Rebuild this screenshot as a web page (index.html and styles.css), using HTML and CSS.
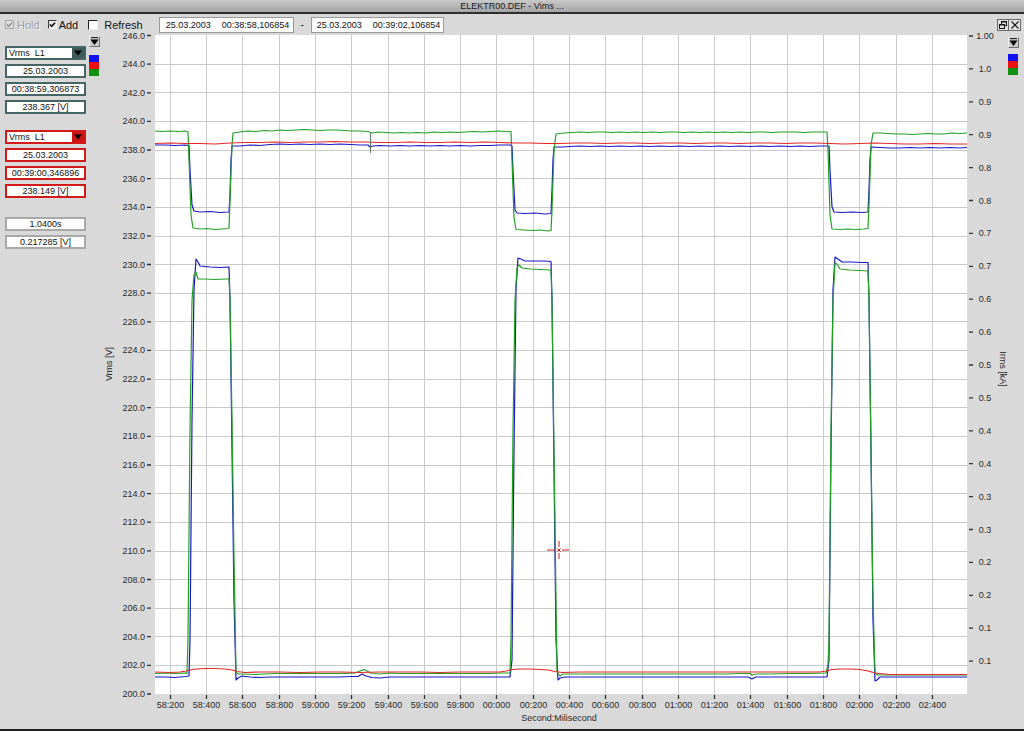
FILE: index.html
```html
<!DOCTYPE html>
<html>
<head>
<meta charset="utf-8">
<title>ELEKTR00.DEF - Vims</title>
<link rel="stylesheet" href="styles.css">
</head>
<body>
<div class="window">
  <div class="titlebar">ELEKTR00.DEF - Vims ...</div>
  <div class="toolbar">
    <label class="chk chk-hold"><span class="box box-disabled"><svg viewBox="0 0 8 8" width="8" height="8"><path d="M1 3.5 L3 5.5 L7 1.5" fill="none" stroke="#8c8c8c" stroke-width="1.6"/></svg></span><span class="chk-text">Hold</span></label>
    <label class="chk chk-add"><span class="box box-checked"><svg viewBox="0 0 8 8" width="8" height="8"><path d="M1 3.5 L3 5.5 L7 1.5" fill="none" stroke="#000" stroke-width="1.6"/></svg></span><span class="chk-text">Add</span></label>
    <label class="chk chk-refresh"><span class="box box-empty"></span><span class="chk-text">Refresh</span></label>
    <div class="range">
      <div class="datebox"><span class="d-date">25.03.2003</span><span class="d-time">00:38:58,106854</span></div>
      <span class="range-dash">-</span>
      <div class="datebox datebox-2"><span class="d-date">25.03.2003</span><span class="d-time">00:39:02,106854</span></div>
    </div>
    <div class="winbtns">
      <span class="winbtn"><svg viewBox="0 0 10 10" width="10" height="10"><rect x="3.5" y="1.5" width="5" height="4" fill="none" stroke="#111"/><rect x="1.5" y="4.5" width="5" height="4" fill="#e2e2e2" stroke="#111"/><path d="M3.5 2h5M1.5 5h5" stroke="#111"/></svg></span>
      <span class="winbtn"><svg viewBox="0 0 10 10" width="10" height="10"><path d="M1.5 1.5 L8.5 8.5 M8.5 1.5 L1.5 8.5" stroke="#111" stroke-width="1.1"/></svg></span>
    </div>
  </div>
  <div class="content">
    <aside class="side-left">
      <div class="fields">
        <div class="group group-teal">
          <div class="combo"><span class="combo-text">Vrms&nbsp; L1</span><span class="combo-btn"><svg viewBox="0 0 10 8" width="10" height="8"><path d="M1 1.5 H9 L5 6.5 Z" fill="#000"/></svg></span></div>
          <div class="field">25.03.2003</div>
          <div class="field">00:38:59,306873</div>
          <div class="field">238.367 [V]</div>
        </div>
        <div class="group group-red">
          <div class="combo"><span class="combo-text">Vrms&nbsp; L1</span><span class="combo-btn"><svg viewBox="0 0 10 8" width="10" height="8"><path d="M1 1.5 H9 L5 6.5 Z" fill="#000"/></svg></span></div>
          <div class="field">25.03.2003</div>
          <div class="field">00:39:00,346896</div>
          <div class="field">238.149 [V]</div>
        </div>
        <div class="group group-gray">
          <div class="field">1.0400s</div>
          <div class="field">0.217285 [V]</div>
        </div>
      </div>
      <div class="legend-col">
        <span class="menu-btn"><svg viewBox="0 0 11 11" width="11" height="11"><path d="M2 1.5 H9" stroke="#222" stroke-width="1.2"/><path d="M1.5 3.5 H9.5 L5.5 9 Z" fill="#000"/></svg></span>
        <div class="swatches"><span class="sw sw-blue"></span><span class="sw sw-red"></span><span class="sw sw-green"></span></div>
      </div>
    </aside>

    <svg class="chart" width="904" height="694" viewBox="102 35 904 694">
      <rect class="plot-bg" x="155" y="35" width="812" height="659"/>
      <path class="grid" d="M155 64.5H967M155 92.5H967M155 121.5H967M155 150.5H967M155 178.5H967M155 207.5H967M155 236.5H967M155 264.5H967M155 293.5H967M155 321.5H967M155 350.5H967M155 379.5H967M155 407.5H967M155 436.5H967M155 465.5H967M155 493.5H967M155 522.5H967M155 551.5H967M155 579.5H967M155 608.5H967M155 636.5H967M155 665.5H967
      M170.5 35V694M206.5 35V694M242.5 35V694M279.5 35V694M315.5 35V694M351.5 35V694M388.5 35V694M424.5 35V694M460.5 35V694M496.5 35V694M533.5 35V694M569.5 35V694M605.5 35V694M642.5 35V694M678.5 35V694M714.5 35V694M750.5 35V694M787.5 35V694M823.5 35V694M859.5 35V694M896.5 35V694M932.5 35V694"/>

      <!-- traces -->
      <polyline class="tr tr-blue" points="155,145 165,145 175,145.5 185,145 189,145.5 190,170 192,205 194,211 200,212 210,211.5 220,212.5 229,212 230,195 231,160 232,146 240,146 250,145 260,145.5 270,144.5 280,144 290,144.5 300,144 310,144.5 320,144 330,144.5 340,144 350,144.5 360,145 368,145 370,147 373,146 380,145.5 390,146 400,145.5 410,146 420,145.5 430,146 440,145.5 450,146 460,145.5 470,146 480,145.5 490,145.5 500,145 510,145 512,146 513,170 515,210 517,213 525,213.5 535,213 545,214 551,213.5 552,190 553,160 554,147 562,147 570,146.5 580,146 590,146.5 600,146 610,146.5 620,146 630,146.5 640,146 650,146.5 660,146 670,146.5 680,146 690,146.5 700,146 710,146.5 720,146 730,146.5 740,146 750,146.5 760,146 770,146.5 780,146 790,146.5 800,146 810,146.5 820,146 829,146 830,170 832,207 834,212 842,212.5 852,212 862,212.5 868,212 869,190 870,160 871,147 880,147.5 890,148 900,148 910,147.5 920,148 930,147.5 940,148 950,147.5 960,148 967,147.5"/>
      <polyline class="tr tr-green" points="155,131 162,131.5 170,131 178,131.5 185,131 188,132 189,160 191,215 193,228 200,229 207,228.5 215,229.5 222,229 228,228.5 229,228 230,200 232,145 233,133 240,132 248,131 256,131.5 264,130.5 272,131 280,130 288,130.5 296,130 304,129.5 312,130 320,130.5 328,130 336,130 344,130.5 352,131 360,131 368,131.5 372,133 378,132 386,132.5 394,133 402,132.5 410,133 418,132.5 426,133 434,132 442,132.5 450,132 458,132.5 466,132 474,131.5 482,132 490,131.5 498,131 506,131.5 511,131.5 512,160 514,218 516,229.5 524,230 532,230.5 540,230 548,231 551,230.5 552,210 554,150 556,134 564,133 572,132.5 580,132 588,132.5 596,132 604,132 612,132.5 620,132 628,132.5 636,132 644,132.5 652,132 660,132.5 668,132 676,132 684,132.5 692,132 700,132.5 708,132 716,132.5 724,132 732,132.5 740,132 748,132.5 756,132 764,132 772,132.5 780,132 788,132 796,132 804,132.5 812,132 820,132 827,132 828,150 830,215 832,229 840,229.5 848,229 856,229.5 864,229 868,228.5 869,205 871,145 873,133 880,133 888,133.5 896,134 904,134 912,134.5 920,134 928,133.5 936,134 944,134 952,133 960,133.5 967,133"/>
      <polyline class="tr tr-red" points="155,143.5 170,143 185,143.5 200,143.5 215,144 230,143 245,142.5 260,142.5 275,142 290,142.5 305,142 320,142 335,141.5 350,142 365,142 380,142.5 395,142.5 410,142 425,142.5 440,142.5 455,142 470,142.5 485,142 500,142.5 515,143 530,143 545,143.5 560,143.5 575,143 590,143 605,143.5 620,143 635,143 650,143.5 665,143 680,143 695,143.5 710,143 725,143 740,143.5 755,143 770,143 785,143.5 800,143 815,143 830,143.5 845,144 860,143.5 875,143 890,143.5 905,144 920,144 935,143.5 950,144 967,144"/>
      <path class="glitch" d="M370.5 133V153"/>

      <polyline class="tr tr-blue" points="155,677 165,677 175,677.5 185,676.5 189,676 190,640 192,420 194,290 196,259 198,262 200,266 210,267 220,267.5 229,267 230,300 232,450 234,600 236,680 238,678 242,676 250,677 260,677.5 270,677 280,677 290,677 300,677 310,677 320,677 330,677 340,677 350,676.5 358,676.5 362,674 366,676 372,677.5 380,678 390,677 400,677 410,677 420,677 430,677 440,677 450,677 460,677 470,677 480,677 490,677 500,677 510,677 512,660 514,450 516,290 518,258 521,259 525,261 535,261 545,261 551,261.5 552,300 554,470 556,640 558,680 560,678 565,677 580,677 600,677 620,677 640,677 660,677 680,677 700,677 720,677 740,677 748,677 752,679 756,677 770,677 790,677 810,677 827,677 829,660 831,450 833,290 835,257 838,259 842,262 852,262 862,262.5 868,262.5 869,300 871,450 873,620 875,681 877,680 880,677 900,677 920,677 940,677 967,677"/>
      <polyline class="tr tr-green" points="155,673.5 165,673 175,673.5 185,673 187,673.5 188,640 190,430 192,300 194,275 196,272 198,279 205,279 215,279.5 225,279 229,279 230,300 232,420 234,560 236,672 238,674 245,674 255,674.5 265,674 275,673.5 285,673.5 295,673.5 305,673.5 315,673.5 325,673.5 335,673.5 345,673.5 355,673 360,671 364,669.5 368,671.5 372,673.5 380,674 390,673 400,673.5 410,673.5 420,673.5 430,673.5 440,673.5 450,673.5 460,673.5 470,673.5 480,673.5 490,673.5 500,673 510,673 511,640 513,430 515,300 517,268 519,265 522,268 530,269 540,269.5 550,270 551,270 552,300 554,450 556,600 557,672 560,676 563,674 575,674 590,674 605,674 620,674 635,674 650,674 665,674 680,674 695,674 710,674 725,674 740,673.5 750,673.5 752,675 756,674 770,674 790,673.5 810,673.5 826,673 828,665 829,640 831,430 833,300 835,263 837,264 840,269 850,270 860,270.5 868,271 869,300 871,450 873,600 875,673 878,675 890,675 910,675 930,675 950,675 967,675"/>
      <polyline class="tr tr-red" points="155,672 170,672.5 180,672 186,671 190,670 196,669 205,668.5 215,668.5 225,669 232,670 237,671.5 245,672.5 260,672 280,672 300,672.5 320,672 340,672 360,672.5 380,672 400,672 420,672 440,672.5 460,672 480,672 500,672 506,671 512,669.5 520,669 530,669 540,669.5 548,670 555,671.5 562,672.5 580,672 600,672 620,672 640,672 660,672 680,672 700,672 720,672 740,672 760,672 780,672 800,672 820,672 826,671 832,669.5 840,669 850,669 860,669.5 868,671 875,673 890,674.5 910,674.5 930,674.5 967,674.5"/>

      <!-- cursor -->
      <path class="cursor" d="M547 550H556M562 550H569M559 541V547M559 553V559M557.5 548.5l3 3M560.5 548.5l-3 3"/>

      <!-- left axis -->
      <path class="tick" d="M147 35.5h4M147 64.1h4M147 92.8h4M147 121.4h4M147 150h4M147 178.7h4M147 207.3h4M147 235.9h4M147 264.5h4M147 293.2h4M147 321.8h4M147 350.4h4M147 379.1h4M147 407.7h4M147 436.3h4M147 465h4M147 493.6h4M147 522.2h4M147 550.8h4M147 579.5h4M147 608.1h4M147 636.7h4M147 665.4h4M147 694h4"/>
      <g class="lbl lbl-left">
        <text x="145" y="38.5">246.0</text><text x="145" y="67.1">244.0</text><text x="145" y="95.8">242.0</text><text x="145" y="124.4">240.0</text><text x="145" y="153">238.0</text><text x="145" y="181.7">236.0</text><text x="145" y="210.3">234.0</text><text x="145" y="238.9">232.0</text><text x="145" y="267.5">230.0</text><text x="145" y="296.2">228.0</text><text x="145" y="324.8">226.0</text><text x="145" y="353.4">224.0</text><text x="145" y="382.1">222.0</text><text x="145" y="410.7">220.0</text><text x="145" y="439.3">218.0</text><text x="145" y="468">216.0</text><text x="145" y="496.6">214.0</text><text x="145" y="525.2">212.0</text><text x="145" y="553.8">210.0</text><text x="145" y="582.5">208.0</text><text x="145" y="611.1">206.0</text><text x="145" y="639.7">204.0</text><text x="145" y="668.4">202.0</text><text x="145" y="697">200.0</text>
      </g>
      <text class="lbl axis-title" x="109" y="367" transform="rotate(-90 109 364)">Vrms [V]</text>

      <!-- right axis -->
      <path class="tick" d="M969 36h4M969 68.9h4M969 101.8h4M969 134.7h4M969 167.6h4M969 200.5h4M969 233.4h4M969 266.3h4M969 299.2h4M969 332.1h4M969 365h4M969 397.9h4M969 430.8h4M969 463.7h4M969 496.6h4M969 529.5h4M969 562.4h4M969 595.3h4M969 628.2h4M969 661.1h4"/>
      <g class="lbl lbl-right">
        <text x="985" y="39">1.00</text><text x="985" y="71.9">1.0</text><text x="985" y="104.8">0.9</text><text x="985" y="137.7">0.9</text><text x="985" y="170.6">0.8</text><text x="985" y="203.5">0.8</text><text x="985" y="236.4">0.7</text><text x="985" y="269.3">0.7</text><text x="985" y="302.2">0.6</text><text x="985" y="335.1">0.6</text><text x="985" y="368">0.5</text><text x="985" y="400.9">0.5</text><text x="985" y="433.8">0.4</text><text x="985" y="466.7">0.4</text><text x="985" y="499.6">0.3</text><text x="985" y="532.5">0.3</text><text x="985" y="565.4">0.2</text><text x="985" y="598.3">0.2</text><text x="985" y="631.2">0.1</text><text x="985" y="664.1">0.1</text>
      </g>
      <text class="lbl axis-title" x="1003" y="372" transform="rotate(90 1003 369)">Irms [kA]</text>

      <!-- bottom axis -->
      <path class="tick tick-v" d="M170.5 695v4M206.5 695v4M242.5 695v4M279.5 695v4M315.5 695v4M351.5 695v4M388.5 695v4M424.5 695v4M460.5 695v4M496.5 695v4M533.5 695v4M569.5 695v4M605.5 695v4M642.5 695v4M678.5 695v4M714.5 695v4M750.5 695v4M787.5 695v4M823.5 695v4M859.5 695v4M896.5 695v4M932.5 695v4"/>
      <g class="lbl lbl-bottom">
        <text x="170.5" y="707.5">58:200</text><text x="206.5" y="707.5">58:400</text><text x="242.5" y="707.5">58:600</text><text x="279.5" y="707.5">58:800</text><text x="315.5" y="707.5">59:000</text><text x="351.5" y="707.5">59:200</text><text x="388.5" y="707.5">59:400</text><text x="424.5" y="707.5">59:600</text><text x="460.5" y="707.5">59:800</text><text x="496.5" y="707.5">00:000</text><text x="533.5" y="707.5">00:200</text><text x="569.5" y="707.5">00:400</text><text x="605.5" y="707.5">00:600</text><text x="642.5" y="707.5">00:800</text><text x="678.5" y="707.5">01:000</text><text x="714.5" y="707.5">01:200</text><text x="750.5" y="707.5">01:400</text><text x="787.5" y="707.5">01:600</text><text x="823.5" y="707.5">01:800</text><text x="859.5" y="707.5">02:000</text><text x="896.5" y="707.5">02:200</text><text x="932.5" y="707.5">02:400</text>
      </g>
      <text class="lbl lbl-bottom" x="559" y="721">Second:Milisecond</text>
    </svg>

    <aside class="side-right">
      <span class="menu-btn"><svg viewBox="0 0 11 11" width="11" height="11"><path d="M2 1.5 H9" stroke="#222" stroke-width="1.2"/><path d="M1.5 3.5 H9.5 L5.5 9 Z" fill="#000"/></svg></span>
      <div class="swatches"><span class="sw sw-blue"></span><span class="sw sw-red"></span><span class="sw sw-green"></span></div>
    </aside>
  </div>
</div>
</body>
</html>
```

FILE: styles.css
```css
* { box-sizing: border-box; }

html, body {
  margin: 0;
  padding: 0;
}

body {
  width: 1024px;
  height: 731px;
  overflow: hidden;
  background: #d9d9d9;
  font-family: "Liberation Sans", Arial, sans-serif;
  color: #111;
}

.window {
  width: 1024px;
  height: 731px;
  display: flex;
  flex-direction: column;
  background: #d9d9d9;
  border-bottom: 2px solid #1e1e1e;
}

.titlebar {
  height: 14px;
  line-height: 12px;
  border-bottom: 2px solid #2e2e2e;
  background: linear-gradient(#c9c9c9, #b2b2b2 60%, #a6a6a6);
  text-align: center;
  font-size: 9px;
  color: #1a1a1a;
}

/* toolbar */
.toolbar {
  height: 21px;
  display: flex;
  align-items: center;
  font-size: 11px;
}

.chk {
  display: flex;
  align-items: center;
  color: #111;
}

.chk-hold { margin-left: 5px; }
.chk-add { margin-left: 8px; }
.chk-refresh { margin-left: 10px; }

.box {
  width: 9px;
  height: 9px;
  display: inline-flex;
  align-items: center;
  justify-content: center;
  margin-right: 3px;
}

.box-disabled {
  border: 1px solid #a8a8a8;
  background: #dcdcdc;
}

.box-checked {
  border-top: 1px solid #3a3a3a;
  border-left: 1px solid #3a3a3a;
  border-right: 1px solid #f4f4f4;
  border-bottom: 1px solid #f4f4f4;
  background: #e6e6e6;
  margin-right: 2px;
}

.box-empty {
  width: 10px;
  height: 10px;
  border-top: 1px solid #222;
  border-left: 1px solid #222;
  border-right: 1px solid #f0f0f0;
  border-bottom: 1px solid #f0f0f0;
  background: #fff;
  margin-right: 6px;
}

.chk-hold .chk-text {
  color: #9d9d9d;
  text-shadow: 1px 1px 0 #f2f2f2;
}

.range {
  display: flex;
  align-items: center;
  margin-left: 16px;
}

.datebox {
  width: 135px;
  height: 16px;
  border: 1px solid #9a9a9a;
  background: #fff;
  font-size: 9px;
  line-height: 14px;
  padding-left: 6px;
  display: flex;
  color: #111;
}

.datebox-2 { width: 133px; padding-left: 5px; }

.d-time { margin-left: 11px; }

.range-dash {
  width: 17px;
  text-align: center;
  font-size: 10px;
}

.winbtns {
  margin-left: auto;
  margin-right: 3px;
  display: flex;
}

.winbtn {
  width: 12px;
  height: 12px;
  border: 1px solid #6a6a6a;
  background: #e2e2e2;
  display: inline-flex;
  align-items: center;
  justify-content: center;
}

.winbtn + .winbtn { border-left: none; }

/* content */
.content {
  height: 694px;
  display: flex;
}

.side-left {
  width: 102px;
  display: flex;
  flex: none;
}

.fields {
  width: 81px;
  margin-left: 5px;
  padding-top: 11px;
  display: flex;
  flex-direction: column;
}

.group {
  display: flex;
  flex-direction: column;
  gap: 4px;
}

.group-red { margin-top: 16px; }
.group-gray { margin-top: 19px; }

.field,
.combo {
  height: 14px;
  border: 2px solid #466666;
  background: #fff;
  font-size: 9px;
  line-height: 10px;
  text-align: center;
  color: #111;
  white-space: nowrap;
}

.group-red .field,
.group-red .combo { border-color: #d21a1a; }

.group-gray .field { border-color: #a9a9a9; }

.combo {
  display: flex;
  text-align: left;
}

.combo-text {
  flex: 1;
  padding-left: 2px;
}

.combo-btn {
  width: 12px;
  background: #3e5b5b;
  display: flex;
  align-items: center;
  justify-content: center;
}

.group-red .combo-btn { background: #cc1414; }

.legend-col {
  width: 11px;
  margin-left: 3px;
  padding-top: 1px;
  display: flex;
  flex-direction: column;
}

.menu-btn {
  width: 11px;
  height: 11px;
  display: block;
  background: #c9c9c9;
  border-top: 1px solid #f0f0f0;
  border-left: 1px solid #f0f0f0;
  border-right: 1px solid #707070;
  border-bottom: 1px solid #707070;
}

.menu-btn svg { display: block; margin: -1px; }

.swatches {
  margin-top: 8px;
  width: 10px;
  display: flex;
  flex-direction: column;
}

.sw { display: block; height: 7px; }
.sw-blue { background: #1010f0; }
.sw-red { background: #ee1010; }
.sw-green { background: #109010; }

.side-right {
  width: 18px;
  flex: none;
  padding-left: 2px;
  padding-top: 2px;
  display: flex;
  flex-direction: column;
}

.side-right .swatches { margin-top: 6px; }

/* chart */
.chart {
  display: block;
  flex: none;
  overflow: visible;
}

.plot-bg { fill: #ffffff; }

.grid {
  fill: none;
  stroke: #cacaca;
  stroke-width: 1;
}

.tr {
  fill: none;
  stroke-width: 1.2;
  stroke-linejoin: round;
}

.tr-green { stroke: #22a022; }
.tr-blue { stroke: #1818c8; }
.tr-red { stroke: #e42828; }

.glitch { stroke: #5a7a6a; stroke-width: 1; }

.cursor {
  fill: none;
  stroke: #c42020;
  stroke-width: 1;
}

.tick {
  fill: none;
  stroke: #333;
  stroke-width: 1.3;
}

.lbl {
  font-family: "Liberation Sans", Arial, sans-serif;
  font-size: 9px;
  fill: #2a2a2a;
}

.lbl-left { text-anchor: end; }
.lbl-right { text-anchor: middle; }
.lbl-bottom { text-anchor: middle; }
.axis-title { text-anchor: middle; }
```
